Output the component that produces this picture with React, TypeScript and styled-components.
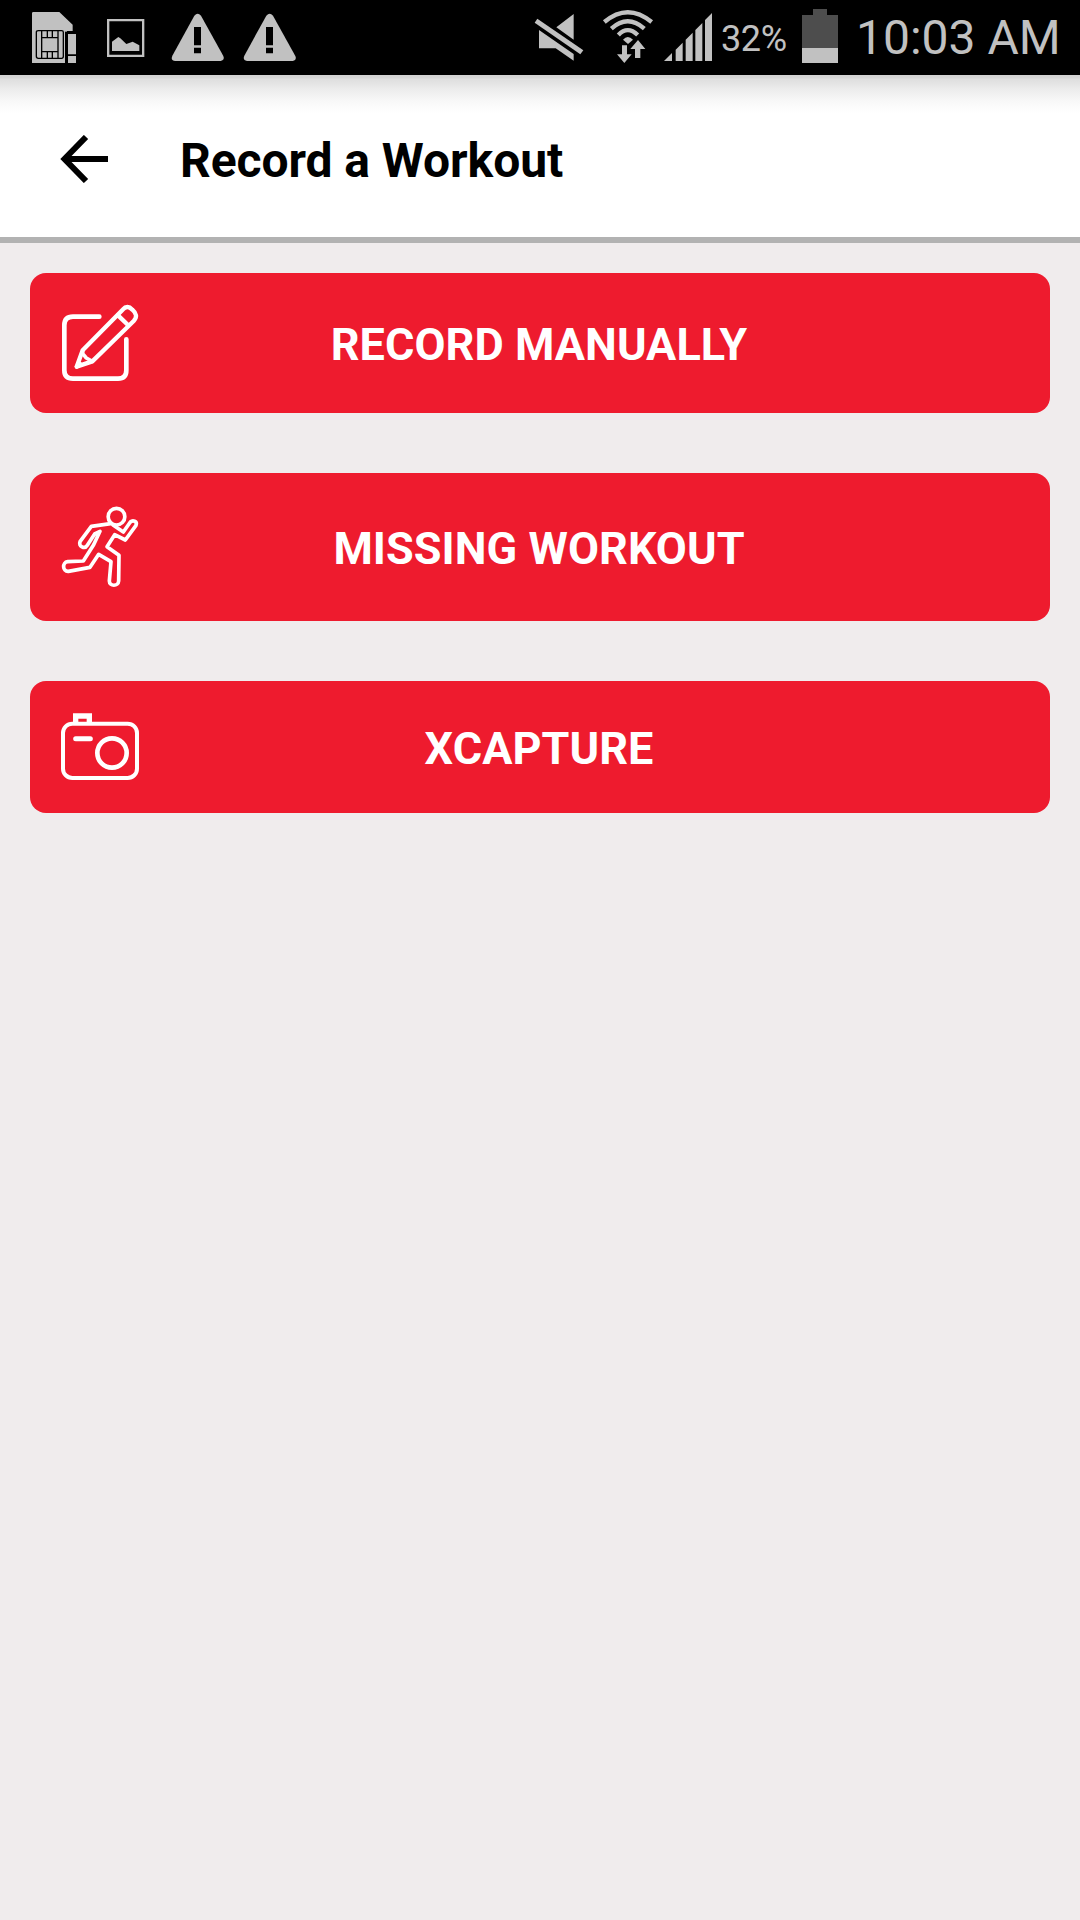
import React from "react";
import styled, { createGlobalStyle } from "styled-components";

const GlobalStyle = createGlobalStyle`
  * { box-sizing: border-box; }
  body { margin: 0; background: #f0eced; }
`;

const Screen = styled.div`
  width: 1080px;
  min-height: 1920px;
  display: flex;
  flex-direction: column;
  background: #f0eced;
  font-family: Roboto, "Noto Sans", sans-serif;
`;

const StatusBar = styled.div`
  height: 75px;
  flex: none;
  display: flex;
  justify-content: space-between;
  padding: 0 20px 0 30px;
  background: #000;
  color: #c1c1c1;
`;

const Notifications = styled.div`
  display: flex;
  gap: 16px;
`;

const SystemStatus = styled.div`
  display: flex;
  align-items: flex-start;
`;

const StatusIcon = styled.svg<{ $width: number; $gapAfter?: number }>`
  display: block;
  flex: none;
  width: ${(p) => p.$width}px;
  height: 75px;
  margin-right: ${(p) => p.$gapAfter ?? 0}px;
  fill: #c1c1c1;
`;

const BatteryText = styled.span`
  width: 82px;
  padding-left: 1px;
  font-size: 36px;
  line-height: 78px;
  letter-spacing: -0.4px;
`;

const Clock = styled.span`
  width: 204px;
  font-size: 48px;
  line-height: 75px;
  white-space: nowrap;
`;

const Header = styled.header`
  height: 168px;
  flex: none;
  display: flex;
  align-items: center;
  gap: 72px;
  padding-left: 60px;
  border-bottom: 6px solid #b2b2b2;
  background: linear-gradient(#d2d2d2 0, #d6d6d6 3px, #dedede 4px, #ececec 14px, #f8f8f8 26px, #fff 38px);
`;

const BackButton = styled.button`
  width: 48px;
  height: 48px;
  padding: 0;
  border: 0;
  background: none;
  margin-top: 6px;
  svg { display: block; }
`;

const Title = styled.h1`
  margin: 9px 0 0;
  font-size: 48px;
  line-height: 56px;
  font-weight: 700;
  letter-spacing: -0.07px;
  color: #000;
`;

const Actions = styled.main`
  display: flex;
  flex-direction: column;
  gap: 60px;
  padding: 30px;
`;

const ActionButton = styled.button<{ $height: number }>`
  height: ${(p) => p.$height}px;
  display: grid;
  grid-template-columns: 80px 1fr 80px;
  align-items: center;
  padding: 0 30px;
  border: 0;
  border-radius: 16px;
  background: #ee1b2e;
  color: #fff;
  font-family: inherit;
`;

const ActionIcon = styled.svg`
  display: block;
  width: 80px;
  height: 80px;
  overflow: visible;
  fill: none;
  stroke: #fff;
  stroke-linecap: round;
  stroke-linejoin: round;
`;

const ActionLabel = styled.span`
  padding: 4px 2px 0 0;
  font-size: 45px;
  line-height: 52px;
  font-weight: 700;
  letter-spacing: 0.05px;
  text-align: center;
  white-space: nowrap;
`;

const WarningIcon = () => (
  <StatusIcon $width={56} viewBox="510 0 168 225">
    <path d="M583 47Q593 36 603 47L670 168Q675 180 662 183H525Q511 181 517 167Z" />
    <path fill="#000" d="M582 81h21v55h-21zM582 143h21v17h-21z" />
  </StatusIcon>
);

const SimIcon = () => (
  <StatusIcon $width={54} viewBox="90 0 162 225">
    <path d="M100 36H178L218 74V93H201V189H96V40Q96 36 100 36Z" />
    <path d="M204 102H228V163H204zM204 168H228V189H204z" />
    <path fill="none" stroke="#000" strokeWidth="4" d="M115 92H185Q190 92 190 97V169Q190 175 185 175H115Q109 175 109 169V97Q109 92 115 92ZM125 93V175M174 93V175M127 113H172M127 155H172M142 94V112M157 94V112M142 156V174M157 156V174" />
    <path stroke="#000" strokeWidth="7" d="M198.500 95V190" />
  </StatusIcon>
);

const PictureIcon = () => (
  <StatusIcon $width={54} viewBox="300 0 162 225">
    <path fill="none" stroke="#c1c1c1" strokeWidth="7" d="M324.500 60.500H429.500V167.500H324.500Z" />
    <path d="M336 153V125L355 111L361 115L379 132L398 125L418 136V153Z" />
  </StatusIcon>
);

const MuteIcon = () => (
  <StatusIcon $width={60} $gapAfter={8} viewBox="30 0 180 225">
    <path d="M161 42V119L109 82ZM57 90L161 162V182L107 145H57Z" />
    <path d="M52 56L190 151L181 163L44 68Z" />
  </StatusIcon>
);

const WifiIcon = () => (
  <StatusIcon $width={60} $gapAfter={2} viewBox="234 0 180 225">
    <g fill="none" stroke="#c1c1c1" strokeWidth="13">
      <path d="M253 66Q323 7 395 66" />
      <path d="M274 86Q323 42 373 86" />
      <path d="M295 105Q323 76 353 105" />
    </g>
    <path d="M309 119Q323 103 339 119L324 132Z" />
    <path stroke="#000" strokeWidth="4" paintOrder="stroke" d="M354 120L376 147H361V174H345V147H331Z" />
    <path d="M306 136H321V163H335L313 189L291 163H306Z" />
  </StatusIcon>
);

const SignalIcon = () => (
  <StatusIcon $width={60} viewBox="420 0 180 225">
    <path d="M432 183L456 159V183ZM467 183V149L488 128V183ZM497 183V119L518 98V183ZM526 183V90L547 69V183ZM555 183V60L576 39V183Z" />
  </StatusIcon>
);

const BatteryIcon = () => (
  <StatusIcon $width={54} viewBox="66 0 162 225">
    <path fill="#4d4d4d" d="M99 27H141V45H174V145H66V45H99Z" />
    <path d="M66 144H174V189H66Z" />
  </StatusIcon>
);

const PencilIcon = () => (
  <ActionIcon viewBox="120 129 240 240" strokeWidth="14">
    <path d="M238 170H159Q133 170 133 196V331Q133 356 159 356H294Q319 356 319 331V238" />
    <path d="M188 271L308 149Q322 133 337 149Q357 166 341 183L217 304L170 320Z" strokeWidth="13" />
    <path d="M294 166L324 195" strokeWidth="13" />
    <path d="M188 272L188 281L199 294L217 304" strokeWidth="11" />
    <path d="M170 320L180 311" strokeWidth="12" />
  </ActionIcon>
);

const RunnerIcon = () => (
  <ActionIcon viewBox="120 126 240 240" strokeWidth="11">
    <circle cx="289.500" cy="155" r="25" strokeWidth="11" />
    <path d="M272 176L214 184L180 230C174 244 194 254 202 241L224 207L240 199L221 239L190 288L143 290C126 292 127 320 145 319L210 307L236 268L273 290L268 348C268 365 295 365 296 348L297 271L261 245L284 209L316 225L348 181C353 168 338 165 331 171L310 201L279 180" />
  </ActionIcon>
);

const CameraIcon = () => (
  <ActionIcon viewBox="120 111 240 240" strokeWidth="12">
    <rect x="129" y="161" width="222" height="163" rx="28" />
    <path d="M167 158V138H208V158" strokeWidth="16" strokeLinecap="butt" strokeLinejoin="miter" />
    <path d="M167 206H211" strokeWidth="15" />
    <circle cx="276" cy="249" r="44" strokeWidth="14" />
  </ActionIcon>
);

const actions = [
  { label: "RECORD MANUALLY", height: 140, Icon: PencilIcon },
  { label: "MISSING WORKOUT", height: 148, Icon: RunnerIcon },
  { label: "XCAPTURE", height: 132, Icon: CameraIcon },
];

export default function App() {
  return (
    <Screen>
      <GlobalStyle />
      <StatusBar>
        <Notifications>
          <SimIcon />
          <PictureIcon />
          <WarningIcon />
          <WarningIcon />
        </Notifications>
        <SystemStatus>
          <MuteIcon />
          <WifiIcon />
          <SignalIcon />
          <BatteryText>32%</BatteryText>
          <BatteryIcon />
          <Clock>10:03 AM</Clock>
        </SystemStatus>
      </StatusBar>
      <Header>
        <BackButton aria-label="Back">
          <svg width="48" height="48" viewBox="0 0 48 48" fill="none" stroke="#000" strokeWidth="6">
            <path d="M26 2L4.500 24L26 46M4 24H48" />
          </svg>
        </BackButton>
        <Title>Record a Workout</Title>
      </Header>
      <Actions>
        {actions.map(({ label, height, Icon }) => (
          <ActionButton key={label} $height={height}>
            <Icon />
            <ActionLabel>{label}</ActionLabel>
          </ActionButton>
        ))}
      </Actions>
    </Screen>
  );
}
